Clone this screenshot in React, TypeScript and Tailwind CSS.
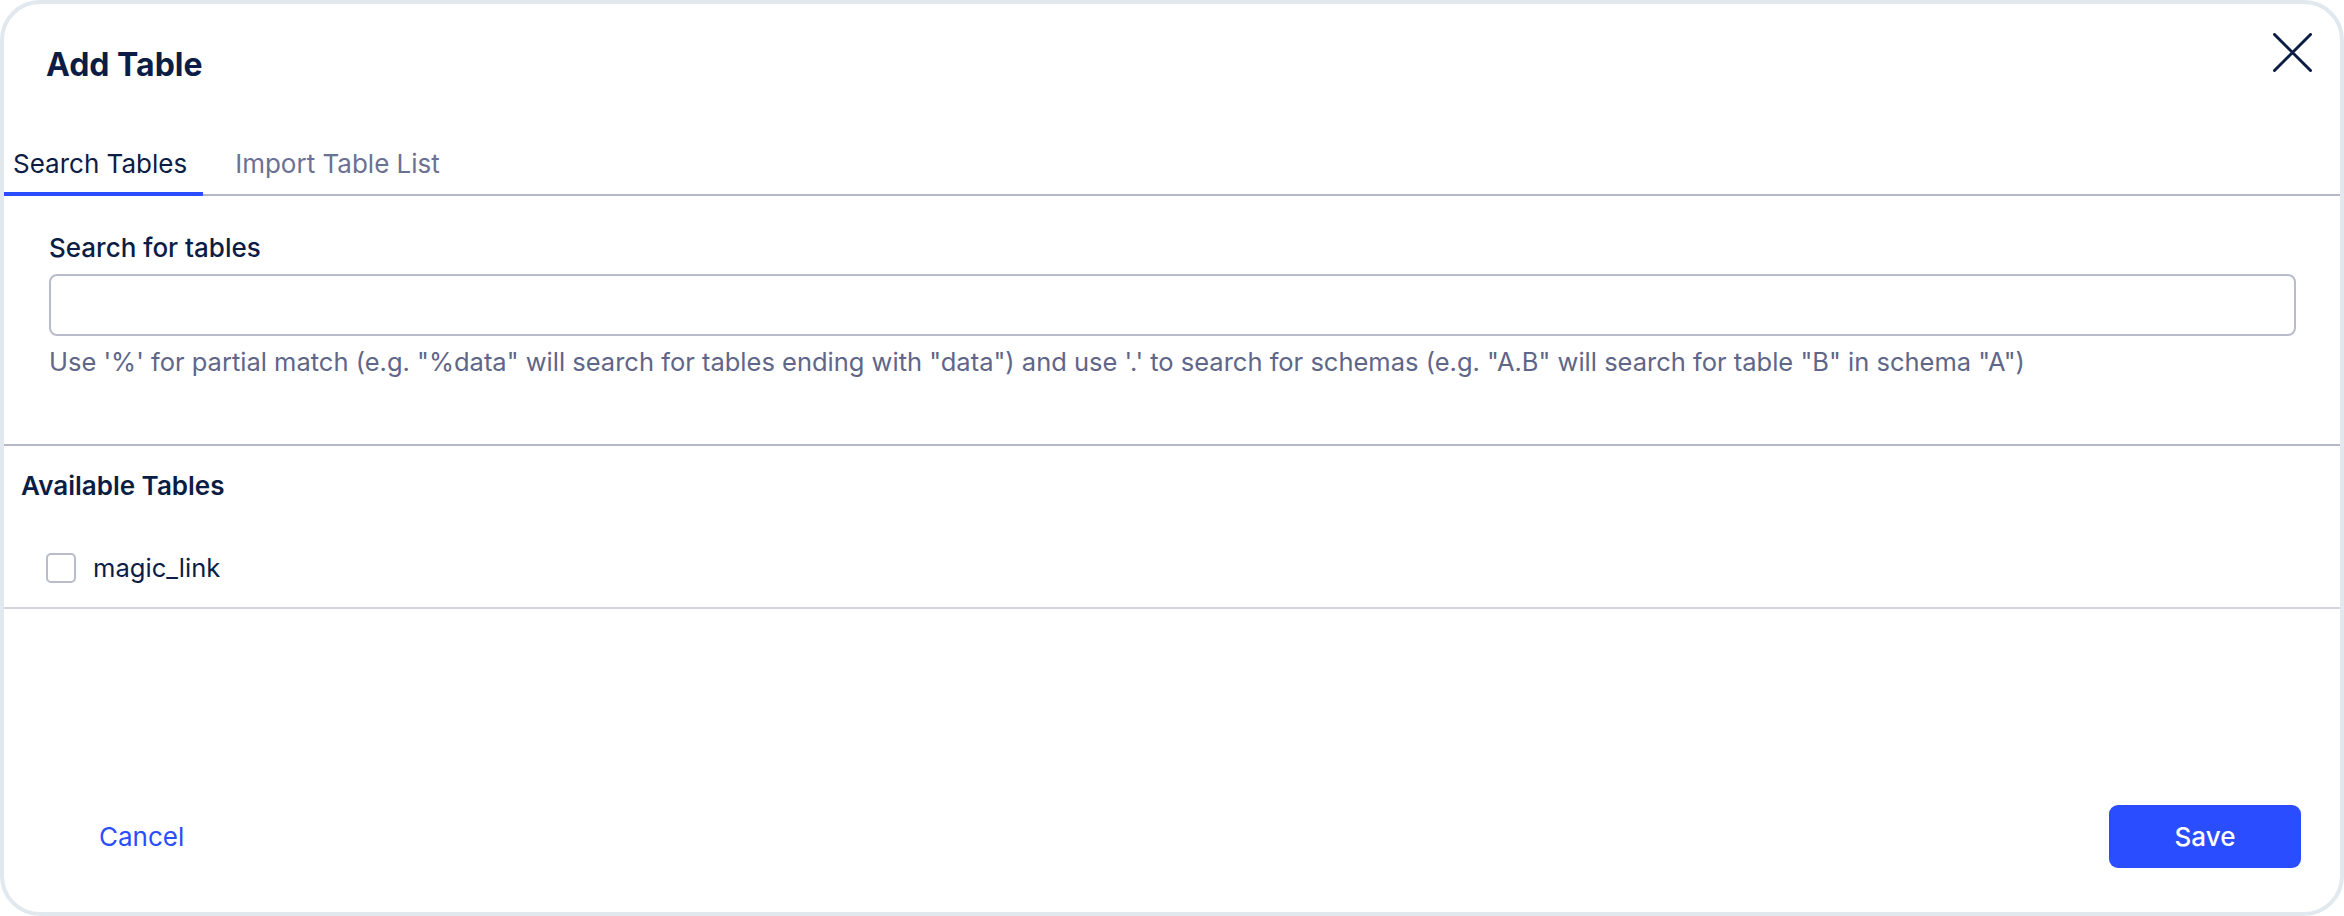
import React from "react";

export default function App() {
  return (
    <div
      className="w-[2344px] h-[916px] bg-white"
      style={{ fontFamily: "Inter, 'Noto Sans', sans-serif" }}
    >
      <div className="w-full h-full border-[4px] border-[#e1e8ee] rounded-[40px] flex flex-col overflow-hidden bg-white">
        {/* Header */}
        <div className="flex justify-between items-start pl-[42px] pr-[28px] pt-[29px]">
          <h1 className="mt-[12px] text-[32px] leading-[40px] font-bold text-[#0b1d45]">
            Add Table
          </h1>
          <button className="w-[39px] h-[39px] text-[#0b1d45]" aria-label="Close">
            <svg width="39" height="39" viewBox="0 0 39 39" fill="none">
              <path d="M1.5 1.5 L37.5 37.5 M37.5 1.5 L1.5 37.5" stroke="currentColor" strokeWidth="3" strokeLinecap="round" />
            </svg>
          </button>
        </div>

        {/* Tabs */}
        <div className="mt-[51px] flex border-b-2 border-[#b3b7c6]">
          <div className="-mb-[2px] pl-[9px] pr-[16px] pt-[12px] pb-[12px] border-b-4 border-[#2a4dff] text-[26px] leading-[32px] text-[#0b1d45]">
            Search Tables
          </div>
          <div className="-mb-[2px] pl-[32px] pr-[16px] pt-[12px] pb-[12px] border-b-4 border-transparent text-[26px] leading-[32px] text-[#6c7193]">
            Import Table List
          </div>
        </div>

        {/* Search section */}
        <div className="pl-[45px] pr-[44px] pt-[36px] pb-[66px] border-b-2 border-[#b3b7c6]">
          <label className="block text-[26px] leading-[32px] font-medium text-[#0b1d45]">
            Search for tables
          </label>
          <input
            type="text"
            className="mt-[10px] block w-full h-[62px] border-2 border-[#b9bcca] rounded-[8px] px-[16px] text-[26px] outline-none"
          />
          <p className="mt-[10px] text-[25.5px] leading-[32px] text-[#5f6688]">
            Use '%' for partial match (e.g. "%data" will search for tables ending with "data") and use '.' to search for schemas (e.g. "A.B" will search for table "B" in schema "A")
          </p>
        </div>

        {/* Available tables */}
        <div className="pl-[17px] pt-[24px] pb-[23px] border-b-2 border-[#d4d4df]">
          <h2 className="text-[26px] leading-[32px] font-semibold text-[#0b1d45]">
            Available Tables
          </h2>
          <div className="mt-[50px] pl-[25px] flex items-center gap-[17px]">
            <span className="w-[30px] h-[30px] border-2 border-[#b9bcca] rounded-[5px] bg-white" />
            <span className="text-[25.6px] leading-[32px] text-[#0b1d45]">magic_link</span>
          </div>
        </div>

        {/* Footer */}
        <div className="mt-auto flex justify-between items-center pl-[95px] pr-[39px] pb-[44px]">
          <button className="text-[26px] leading-[32px] text-[#2a4dff]">Cancel</button>
          <button className="w-[192px] h-[63px] rounded-[9px] bg-[#2a4dff] text-white text-[26px] leading-[32px] font-medium">
            Save
          </button>
        </div>
      </div>
    </div>
  );
}
